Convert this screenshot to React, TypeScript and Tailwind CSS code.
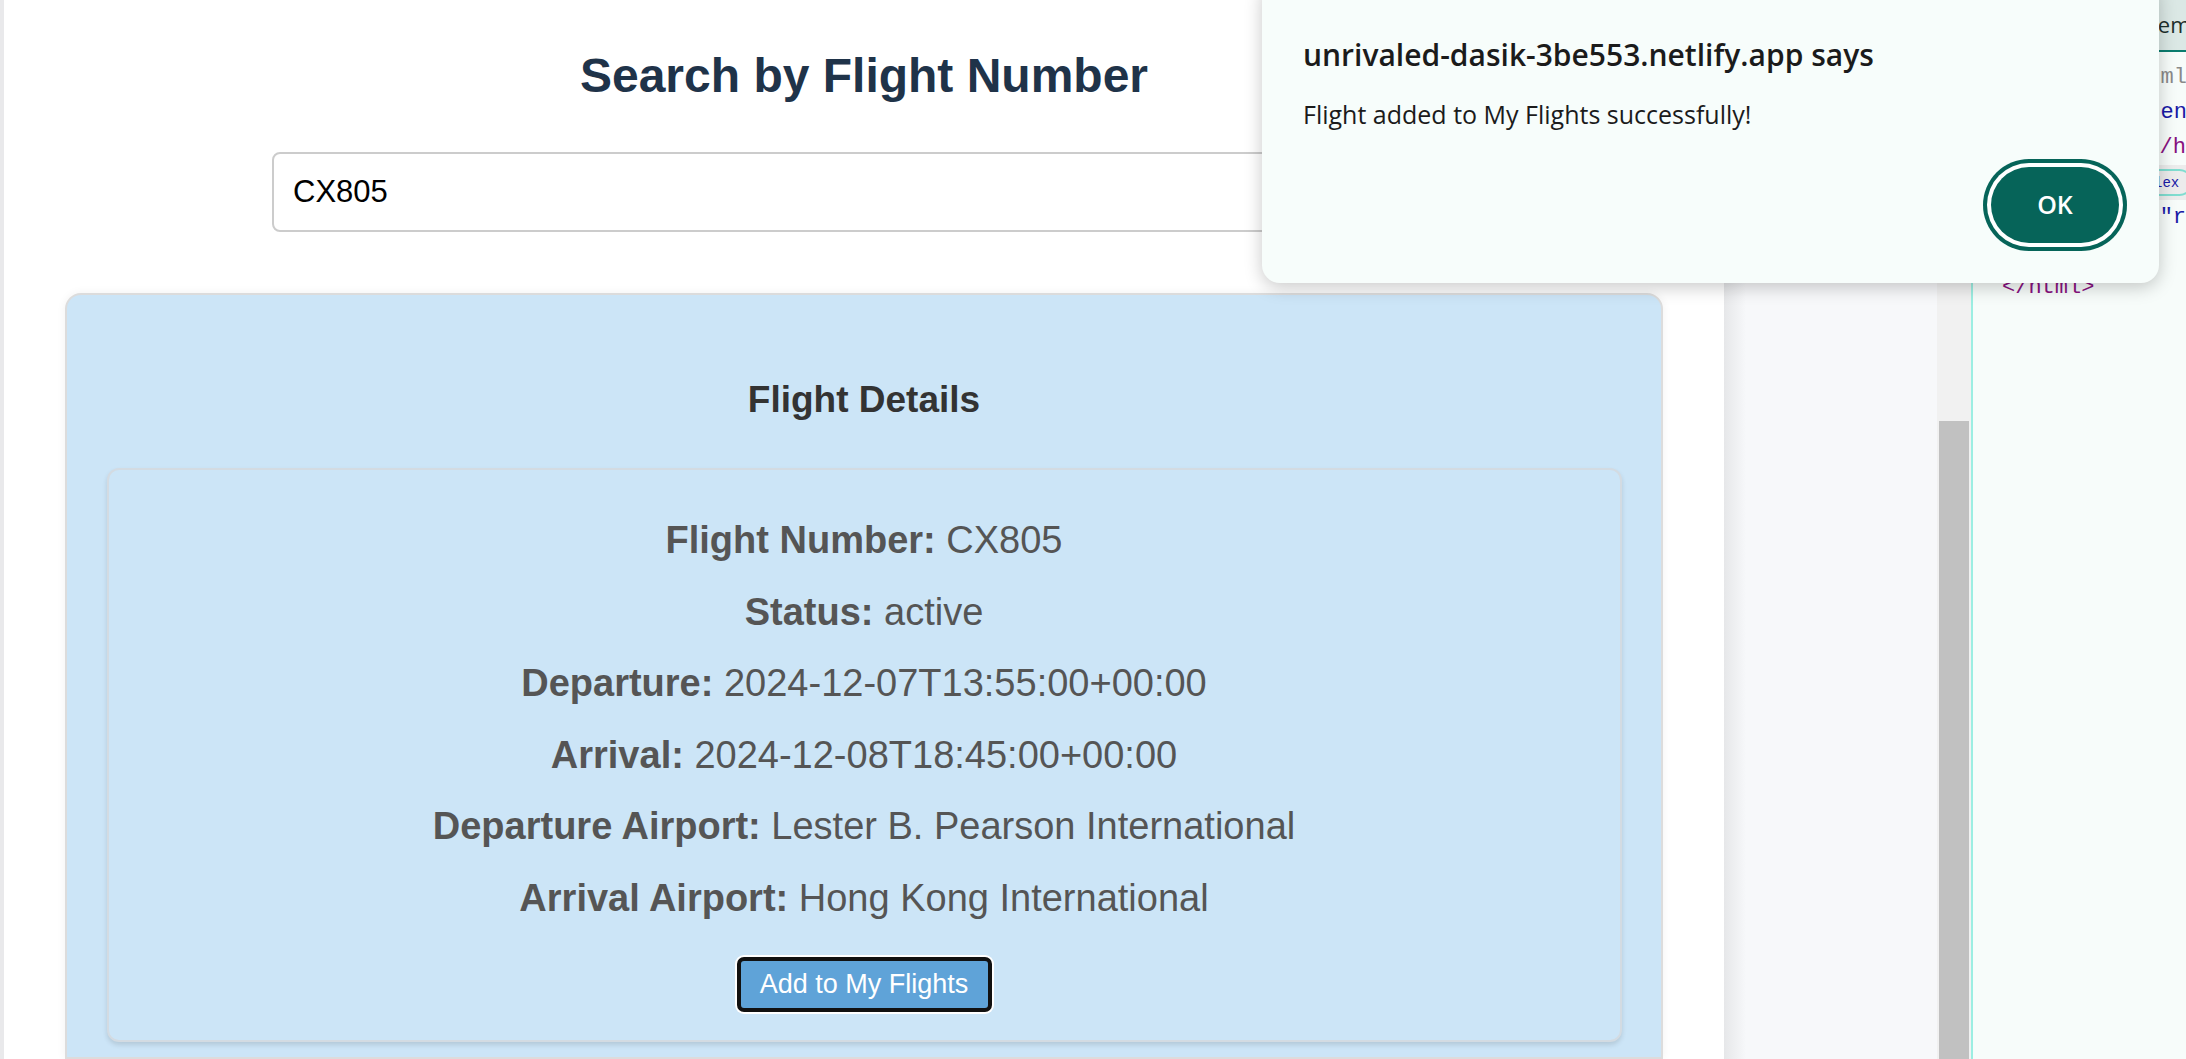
import React from "react"

const details: { label: string; value: string }[] = [
  { label: "Flight Number:", value: "CX805" },
  { label: "Status:", value: "active" },
  { label: "Departure:", value: "2024-12-07T13:55:00+00:00" },
  { label: "Arrival:", value: "2024-12-08T18:45:00+00:00" },
  { label: "Departure Airport:", value: "Lester B. Pearson International" },
  { label: "Arrival Airport:", value: "Hong Kong International" },
]

function DevtoolsPane() {
  return (
    <div className="flex-1 bg-[#f7fcfa] font-['Liberation_Mono',monospace] text-[22px]">
      <div className="flex h-[52px] items-end bg-[#dbe8e5] pl-[161px]">
        <div className="border-b-2 border-[#0b7d6f] px-[6px] pb-[12px] font-['Open_Sans',sans-serif] text-[22px] leading-[28px] text-[#1d2f2b]">
          Elements
        </div>
      </div>
      <div className="pt-[8px] leading-[35px] whitespace-pre">
        <div className="pl-[29px] text-[#8a8a8a]">{"<!DOCTYPE html>"}</div>
        <div className="pl-[29px]">
          <span className="text-[#881280]">{"<html"}</span>
          <span className="text-[#994500]"> lang</span>
          <span className="text-[#333]">=</span>
          <span className="text-[#1a1aa6]">"en"</span>
          <span className="text-[#881280]">{">"}</span>
        </div>
        <div className="pl-[81px] text-[#881280]">{"<head>…</head>"}</div>
        <div className="flex items-center bg-[#ececec] pl-[55px]">
          <span className="text-[#881280]">{"<body>"}</span>
          <span className="ml-[26px] inline-flex h-[27px] w-[60px] items-center justify-end rounded-full border-2 border-[#80ddd0] pr-[12px] text-[14px] leading-none text-[#1a1aa6]">
            flex
          </span>
        </div>
        <div className="pl-[81px]">
          <span className="text-[#881280]">{"<div"}</span>
          <span className="text-[#994500]"> id</span>
          <span className="text-[#333]">=</span>
          <span className="text-[#1a1aa6]">"root"</span>
          <span className="text-[#881280]">{">…</div>"}</span>
        </div>
        <div className="pl-[55px] text-[#881280]">{"</body>"}</div>
        <div className="pl-[29px] text-[#881280]">{"</html>"}</div>
      </div>
    </div>
  )
}

function AlertDialog() {
  return (
    <div className="absolute left-[1262px] top-[-20px] flex h-[303px] w-[897px] flex-col rounded-[18px] bg-[#f7fdfb] pb-[40px] pl-[41px] pr-[40px] pt-[55px] font-['Open_Sans',sans-serif] shadow-[0_4px_18px_rgba(0,0,0,0.22)]">
      <h2 className="text-[30px] font-semibold leading-[40px] text-[#1b1b1b]">
        unrivaled-dasik-3be553.netlify.app says
      </h2>
      <p className="mt-[22px] text-[25px] leading-[34px] text-[#1b1b1b]">
        Flight added to My Flights successfully!
      </p>
      <div className="mt-auto flex justify-end">
        <button className="h-[76px] w-[128px] rounded-full bg-[#066459] text-[25px] font-semibold text-white ring-4 ring-[#066459] ring-offset-4 ring-offset-white">
          OK
        </button>
      </div>
    </div>
  )
}

export default function App() {
  return (
    <div className="relative flex h-[1059px] w-[2186px] overflow-hidden bg-white font-['Liberation_Sans',Arial,sans-serif]">
      <main className="flex w-[1724px] shrink-0 flex-col items-center border-l-4 border-[#e9e9eb] bg-white">
        <h1 className="mt-[48px] text-[48px] font-bold leading-[55px] text-[#1f3349]">Search by Flight Number</h1>
        <input
          readOnly
          value="CX805"
          className="mt-[49px] h-[80px] w-[1184px] rounded-[8px] border-2 border-[#cccccc] bg-white pl-[19px] text-[31px] text-black outline-none"
        />
        <section className="mt-[61px] flex w-[1598px] flex-1 flex-col items-center rounded-t-[16px] border-2 border-[#dcdcdc] bg-[#cce5f7] pt-[83px] shadow-[0_0_10px_rgba(0,0,0,0.06)]">
          <h2 className="text-[37px] font-bold leading-[43px] text-[#333333]">Flight Details</h2>
          <div className="mt-[47px] flex w-[1515px] flex-col items-center rounded-[12px] border-2 border-[#d3dbe2] bg-[#cce5f7] pb-[28px] pt-[35px] shadow-[0_3px_5px_rgba(0,0,0,0.12)]">
            {details.map((d) => (
              <p key={d.label} className="text-[38px] leading-[71.6px] text-[#555555]">
                <strong className="font-bold">{d.label}</strong> {d.value}
              </p>
            ))}
            <button className="mt-[22px] h-[55px] w-[255px] rounded-[7px] border-4 border-[#111111] bg-[#5fa3d8] text-[27px] leading-none text-white ring-2 ring-white">
              Add to My Flights
            </button>
          </div>
        </section>
      </main>

      <aside className="w-[213px] shrink-0 bg-[linear-gradient(to_right,#e6e7e9,#f7f8fa_22px)]" />

      <div className="w-[34px] shrink-0 bg-[#f1f1f1] px-[2px] pt-[421px]">
        <div className="h-full bg-[#c1c1c1]" />
      </div>

      <div className="w-[2px] shrink-0 bg-[#9ceee2]" />

      <DevtoolsPane />

      <AlertDialog />
    </div>
  )
}
